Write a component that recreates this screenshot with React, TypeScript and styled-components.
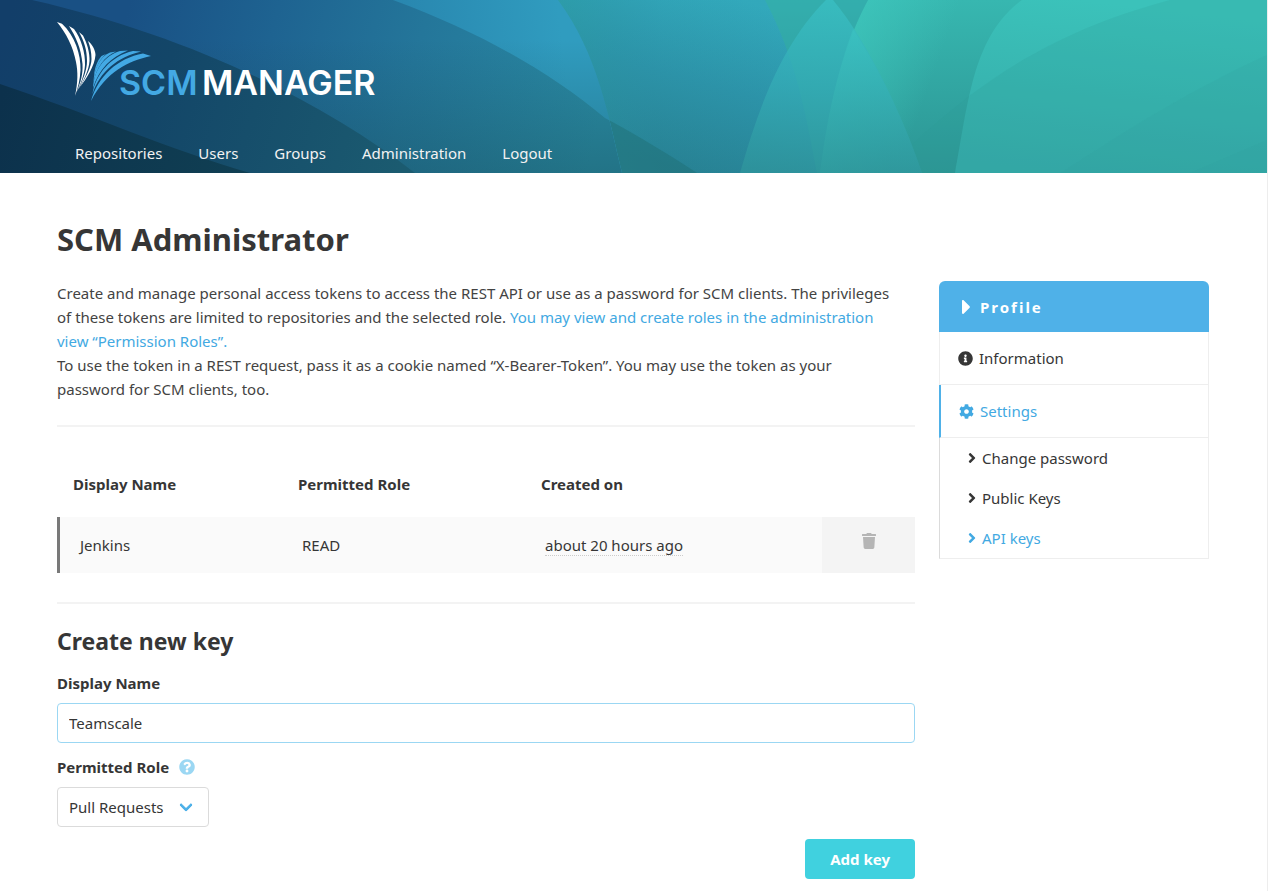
import React, { useState } from "react";
import styled, { createGlobalStyle, css } from "styled-components";
import {
  FaAngleRight,
  FaCaretRight,
  FaCog,
  FaInfoCircle,
  FaQuestionCircle,
  FaTrash,
} from "react-icons/fa";

const color = {
  text: "#363636",
  body: "#434343",
  link: "#42a9e2",
  primary: "#4fb1e8",
  action: "#40d1df",
  line: "#eeeeee",
  border: "#dbdbdb",
};

const GlobalStyle = createGlobalStyle`
  *, *::before, *::after { box-sizing: border-box; }
  body {
    margin: 0;
    background: #fff;
    color: ${color.body};
    font-family: "Noto Sans", "Open Sans", sans-serif;
    font-size: 15px;
    line-height: 24px;
  }
  a { color: ${color.link}; text-decoration: none; }
  button, input, select { font: inherit; color: inherit; }
`;

const Page = styled.div`
  border-right: 1px solid #ededed;
`;

const Header = styled.header`
  position: relative;
  padding: 21px 58px 0 57px;
  overflow: hidden;
`;

const Backdrop = styled.svg`
  position: absolute;
  inset: 0;
  width: 100%;
  height: 100%;
`;

const LogoLink = styled.a`
  position: relative;
  display: block;
  width: 330px;

  svg {
    display: block;
  }
`;

const Nav = styled.nav`
  position: relative;
  display: flex;
  margin-top: 12px;
`;

const NavLink = styled.a`
  padding: 8px 18px;
  color: #f2f2f2;
`;

const Main = styled.main`
  padding: 48px 58px 12px 57px;
`;

const Columns = styled.div`
  display: grid;
  grid-template-columns: minmax(0, 1fr) 270px;
  gap: 24px;
  align-items: start;
`;

const Title = styled.h1`
  margin: 0 0 24px;
  color: ${color.text};
  font-size: 31px;
  line-height: 36px;
`;

const Subtitle = styled.h2`
  margin: 0 0 16px;
  color: ${color.text};
  font-size: 23px;
  line-height: 27px;
`;

const Paragraph = styled.p`
  margin: 0;
  padding-right: 16px;
`;

const Divider = styled.hr<{ $top?: number }>`
  height: 2px;
  margin: ${(p) => p.$top ?? 24}px 0 24px;
  border: 0;
  background: #f3f3f3;
`;

const KeyTable = styled.table`
  width: 100%;
  border-collapse: separate;
  border-spacing: 0;
  table-layout: fixed;
`;

const HeadCell = styled.th<{ $width?: number }>`
  width: ${(p) => (p.$width ? `${p.$width}px` : "auto")};
  padding: 21px 16px;
  color: ${color.text};
  text-align: left;
`;

const Cell = styled.td<{ $first?: boolean }>`
  padding: 16px 20px;
  border-left: ${(p) => (p.$first ? "3px solid #797979" : "0")};
  background: #fafafa;
  color: ${color.text};
`;

const ActionCell = styled.td`
  padding: 0;
  background: #f4f4f4;
  text-align: center;
  vertical-align: top;
`;

const IconButton = styled.button`
  display: inline-flex;
  padding: 16px;
  border: 0;
  background: none;
  color: #b5b5b5;
  font-size: 16px;
  cursor: pointer;
`;

const Age = styled.time`
  border-bottom: 1px dotted #cccccc;
  display: inline-block;
  line-height: 20px;
`;

const Field = styled.div`
  margin-bottom: 12px;
`;

const Label = styled.label`
  display: flex;
  align-items: center;
  gap: 10px;
  margin-bottom: 8px;
  color: ${color.text};
  font-weight: 700;

  svg {
    color: #9bd7f3;
    font-size: 16px;
  }
`;

const control = css`
  height: 40px;
  padding: 0 11px;
  border: 1px solid ${color.border};
  border-radius: 4px;
  background: #fff;
  color: ${color.text};
  outline: 0;
`;

const TextInput = styled.input`
  ${control}
  display: block;
  width: 100%;
  border-color: #9bd7f3;
`;

const SelectBox = styled.div`
  position: relative;
  width: 152px;

  &::after {
    content: "";
    position: absolute;
    top: 13px;
    right: 18px;
    width: 10px;
    height: 10px;
    border: 3px solid ${color.primary};
    border-top: 0;
    border-right: 0;
    border-radius: 2px;
    transform: rotate(-45deg);
    pointer-events: none;
  }
`;

const Select = styled.select`
  ${control}
  display: block;
  width: 100%;
  appearance: none;
`;

const Actions = styled.div`
  display: flex;
  justify-content: flex-end;
`;

const SubmitButton = styled.button`
  height: 40px;
  padding: 0 25px;
  border: 0;
  border-radius: 4px;
  background: ${color.action};
  color: #fff;
  font-weight: 700;
  cursor: pointer;
`;

const Sidebar = styled.aside`
  border-radius: 6px 6px 0 0;
  overflow: hidden;
`;

const SidebarHeading = styled.p`
  display: flex;
  align-items: center;
  gap: 9px;
  height: 51px;
  margin: 0;
  padding: 0 23px;
  background: ${color.primary};
  color: #fff;
  font-weight: 700;
  letter-spacing: 2px;

  svg {
    flex: none;
    width: 9px;
    height: 16px;
  }
`;

const Menu = styled.ul`
  margin: 0;
  padding: 0;
  list-style: none;
`;

const MenuLink = styled.a<{ $active?: boolean }>`
  display: flex;
  align-items: center;
  gap: 6px;
  height: 53px;
  padding: 0 18px;
  border: solid ${color.line};
  border-width: 0 1px 1px;
  color: ${color.text};

  ${(p) =>
    p.$active &&
    css`
      border-left: 2px solid ${color.primary};
      color: ${color.link};
    `}

  svg {
    font-size: 15px;
  }
`;

const SubMenu = styled(Menu)`
  border: 1px solid ${color.line};
  border-top: 0;
  border-left-color: ${color.border};
`;

const SubLink = styled.a<{ $active?: boolean }>`
  display: flex;
  align-items: center;
  gap: 5px;
  height: 40px;
  padding: 0 27px;
  color: ${(p) => (p.$active ? color.link : color.text)};

  svg {
    width: 10px;
    height: 16px;
  }
`;

const HeaderBackdrop = () => (
  <Backdrop viewBox="0 0 1267 173" preserveAspectRatio="none" aria-hidden="true">
    <defs>
      <clipPath id="left-zone">
        <path d="M558 0C598 54 608 115 622 173H0V0Z" />
      </clipPath>
      <linearGradient id="teal" x1="0" y1="0" x2="0" y2="173" gradientUnits="userSpaceOnUse">
        <stop offset="0" stopColor="#37b7b0" />
        <stop offset="1" stopColor="#2c9594" />
      </linearGradient>
      <linearGradient id="right" x1="1080" y1="0" x2="1060" y2="173" gradientUnits="userSpaceOnUse">
        <stop offset="0" stopColor="#3bc2ba" />
        <stop offset="0.5" stopColor="#38b6b1" />
        <stop offset="1" stopColor="#35aaa9" />
      </linearGradient>
      <linearGradient id="glow" x1="868" y1="0" x2="950" y2="30" gradientUnits="userSpaceOnUse">
        <stop offset="0" stopColor="#3fcabf" stopOpacity="0.6" />
        <stop offset="1" stopColor="#3fcabf" stopOpacity="0" />
      </linearGradient>
      <linearGradient id="leaf" x1="830" y1="0" x2="820" y2="173" gradientUnits="userSpaceOnUse">
        <stop offset="0" stopColor="#3ac0c4" />
        <stop offset="0.5" stopColor="#34acb6" />
        <stop offset="1" stopColor="#2f969d" />
      </linearGradient>
      <linearGradient id="lens" x1="0" y1="30" x2="0" y2="173" gradientUnits="userSpaceOnUse">
        <stop offset="0" stopColor="#3bc3c2" />
        <stop offset="1" stopColor="#2f999d" />
      </linearGradient>
      <linearGradient id="sky" x1="740" y1="0" x2="690" y2="173" gradientUnits="userSpaceOnUse">
        <stop offset="0" stopColor="#33abbd" />
        <stop offset="0.5" stopColor="#2c93a8" />
        <stop offset="1" stopColor="#278091" />
      </linearGradient>
      <linearGradient id="sky-edge" x1="560" y1="0" x2="660" y2="0" gradientUnits="userSpaceOnUse">
        <stop offset="0" stopColor="#2b9aa0" stopOpacity="0.45" />
        <stop offset="1" stopColor="#2b8fa8" stopOpacity="0.1" />
      </linearGradient>
      <linearGradient id="azure" x1="560" y1="20" x2="390" y2="40" gradientUnits="userSpaceOnUse">
        <stop offset="0" stopColor="#309cbf" />
        <stop offset="1" stopColor="#2885ae" />
      </linearGradient>
      <linearGradient id="blue" x1="130" y1="0" x2="600" y2="120" gradientUnits="userSpaceOnUse">
        <stop offset="0" stopColor="#195084" />
        <stop offset="0.3" stopColor="#1e6391" />
        <stop offset="0.6" stopColor="#24769a" />
        <stop offset="1" stopColor="#2a8ca5" />
      </linearGradient>
      <linearGradient id="navy" x1="0" y1="40" x2="400" y2="170" gradientUnits="userSpaceOnUse">
        <stop offset="0" stopColor="#123e69" />
        <stop offset="0.4" stopColor="#134668" />
        <stop offset="1" stopColor="#1b5b70" />
      </linearGradient>
      <linearGradient id="deep" x1="0" y1="100" x2="240" y2="173" gradientUnits="userSpaceOnUse">
        <stop offset="0" stopColor="#0c314c" />
        <stop offset="1" stopColor="#103f53" />
      </linearGradient>
      <linearGradient id="shade" x1="0" y1="40" x2="0" y2="173" gradientUnits="userSpaceOnUse">
        <stop offset="0" stopColor="#123f46" stopOpacity="0" />
        <stop offset="1" stopColor="#123f46" stopOpacity="0.32" />
      </linearGradient>
    </defs>
    <rect width="1267" height="173" fill="url(#teal)" />
    <path d="M868 0C840 52 828 112 820 173H1022V0Z" fill="url(#glow)" />
    <path d="M1022 0C972 36 968 106 955 173H1267V0Z" fill="url(#right)" />
    <path d="M880 173C930 132 1000 45 1170 0H1267V173Z" fill="#2b9a98" opacity="0.2" />
    <path d="M1060 173C1130 128 1190 90 1267 55V173Z" fill="#329f9f" opacity="0.14" />
    <path d="M1190 173L1267 140V173Z" fill="#329f9f" opacity="0.12" />
    <path d="M765 0C796 58 806 115 817 173H0V0Z" fill="url(#sky)" />
    <path d="M558 0H765C796 58 806 115 817 173H558Z" fill="url(#sky-edge)" />
    <path d="M765 0C796 58 806 115 817 173H820C828 112 840 52 868 0Z" fill="#2e9fa8" opacity="0.35" />
    <path d="M826 0C780 46 758 110 740 173H922C902 115 868 42 833 0Z" fill="url(#leaf)" opacity="0.75" />
    <path d="M853 29C835 78 826 125 820 173H922C905 122 882 74 853 29Z" fill="url(#lens)" opacity="0.6" />
    <path d="M393 0C480 32 550 72 605 118C640 137 670 155 697 173H0V0Z" fill="#1f6f76" opacity="0.5" />
    <g clipPath="url(#left-zone)">
      <rect width="640" height="173" fill="url(#azure)" />
      <path d="M393 0C480 32 550 72 605 118L640 137V173H0V0Z" fill="url(#blue)" />
      <rect width="640" height="173" fill="url(#shade)" />
    </g>
    <path d="M32 0C190 36 320 100 415 173H0V0Z" fill="url(#navy)" />
    <path d="M0 84C90 114 170 150 250 173H0Z" fill="url(#deep)" />
  </Backdrop>
);

const Logo = () => (
  <svg width="330" height="100" viewBox="57 21 330 100" role="img" aria-label="SCM-Manager">
    <g fill="#ffffff">
      <path d="M57 22L62 23.800C75 36 81 55 80.500 70C80 80 78 88 75 96C78 82 78 72 76 62C73 46 66 33 57 22Z" />
      <path d="M69 26L74 29C81 38 85.500 53 85 65C84.500 75 80 86 76.500 92C81 82 83 74 82.500 64C81 48 76 37 69 26Z" />
      <path d="M79 32L83 35.500C87 43 90 53 89.500 61C89 70 83 82 78 90C83 80 87 70 87 61C87 50 84 41 79 32Z" />
      <path d="M88 41C92 44 95.500 50 95.500 55C94.500 66 87 78 80 87C86 77 91.500 67 91.500 59C91.500 52 90 46 88 41Z" />
    </g>
    <g fill="#43a9e4">
      <path d="M143 53.500L151 56C128 61 106 72 91 101C98 76 118 58 143 53.500Z" />
      <path d="M133 51L141 51.500C118 57 100 71 92.500 94C95.500 74 111 56 133 51Z" />
      <path d="M120 51L128 50.500C111 57 99 69 93 88C94 70 104 56 120 51Z" />
      <path d="M110 52.500L116 51.500C104 57 97 67 93.500 82C94 70 99 57 110 52.500Z" />
      <path d="M101.500 56L106 54C100 59 96.500 66 94 76C94.500 68 97 61 101.500 56Z" />
    </g>
    <g fontFamily="Inter, sans-serif" fontSize="34" fontWeight="600">
      <text x="119" y="95" fill="#43a9e4">SCM</text>
      <text x="202" y="95" fill="#ffffff">MANAGER</text>
    </g>
  </svg>
);

const navigation = ["Repositories", "Users", "Groups", "Administration", "Logout"];
const subNavigation = ["Change password", "Public Keys", "API keys"];
const roles = ["Pull Requests", "READ", "WRITE", "OWNER"];

export default function App() {
  const [name, setName] = useState("Teamscale");
  const [role, setRole] = useState(roles[0]);

  return (
    <Page>
      <GlobalStyle />
      <Header>
        <HeaderBackdrop />
        <LogoLink href="#">
          <Logo />
        </LogoLink>
        <Nav>
          {navigation.map((item) => (
            <NavLink key={item} href="#">
              {item}
            </NavLink>
          ))}
        </Nav>
      </Header>
      <Main>
        <Title>SCM Administrator</Title>
        <Columns>
          <section>
            <Paragraph>
              Create and manage personal access tokens to access the REST API or use as a password for SCM
              clients. The privileges of these tokens are limited to repositories and the selected role.{" "}
              <a href="#">You may view and create roles in the administration view “Permission Roles”.</a>
            </Paragraph>
            <Paragraph>
              To use the token in a REST request, pass it as a cookie named “X-Bearer-Token”. You may use the
              token as your password for SCM clients, too.
            </Paragraph>
            <Divider />
            <KeyTable>
              <thead>
                <tr>
                  <HeadCell $width={225}>Display Name</HeadCell>
                  <HeadCell $width={243}>Permitted Role</HeadCell>
                  <HeadCell>Created on</HeadCell>
                  <HeadCell $width={93} aria-label="Actions" />
                </tr>
              </thead>
              <tbody>
                <tr>
                  <Cell $first>Jenkins</Cell>
                  <Cell>READ</Cell>
                  <Cell>
                    <Age>about 20 hours ago</Age>
                  </Cell>
                  <ActionCell>
                    <IconButton type="button" aria-label="Delete key">
                      <FaTrash />
                    </IconButton>
                  </ActionCell>
                </tr>
              </tbody>
            </KeyTable>
            <Divider $top={29} />
            <Subtitle>Create new key</Subtitle>
            <form onSubmit={(e) => e.preventDefault()}>
              <Field>
                <Label htmlFor="display-name">Display Name</Label>
                <TextInput id="display-name" value={name} onChange={(e) => setName(e.target.value)} />
              </Field>
              <Field>
                <Label htmlFor="permitted-role">
                  Permitted Role
                  <FaQuestionCircle aria-hidden="true" />
                </Label>
                <SelectBox>
                  <Select id="permitted-role" value={role} onChange={(e) => setRole(e.target.value)}>
                    {roles.map((r) => (
                      <option key={r}>{r}</option>
                    ))}
                  </Select>
                </SelectBox>
              </Field>
              <Actions>
                <SubmitButton type="submit">Add key</SubmitButton>
              </Actions>
            </form>
          </section>
          <Sidebar>
            <SidebarHeading>
              <FaCaretRight viewBox="0 96 192 320" />
              Profile
            </SidebarHeading>
            <Menu>
              <li>
                <MenuLink href="#">
                  <FaInfoCircle />
                  Information
                </MenuLink>
              </li>
              <li>
                <MenuLink href="#" $active>
                  <FaCog />
                  Settings
                </MenuLink>
                <SubMenu>
                  {subNavigation.map((item) => (
                    <li key={item}>
                      <SubLink href="#" $active={item === "API keys"}>
                        <FaAngleRight />
                        {item}
                      </SubLink>
                    </li>
                  ))}
                </SubMenu>
              </li>
            </Menu>
          </Sidebar>
        </Columns>
      </Main>
    </Page>
  );
}
